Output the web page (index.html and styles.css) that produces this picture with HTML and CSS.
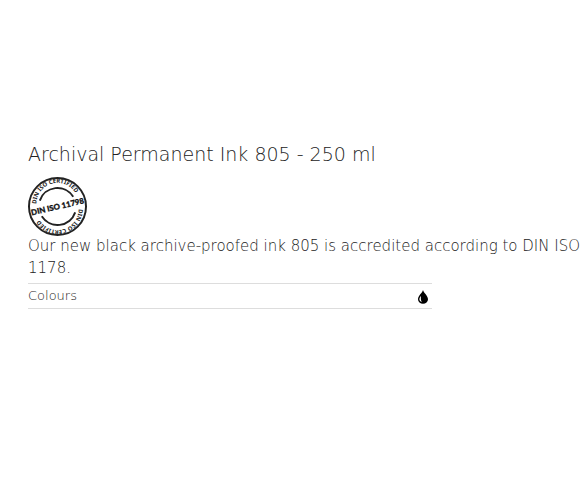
FILE: index.html
```html
<!DOCTYPE html>
<html lang="en">

<head>
    <meta charset="UTF-8">
    <meta name="viewport" content="width=device-width, initial-scale=1.0">
    <title>Archival Permanent Ink 805 - 250 ml</title>
    <link rel="stylesheet" href="styles.css">
</head>

<body>
    <main class="product">
        <h1 class="product-title">Archival Permanent Ink 805 - 250 ml</h1>
        <svg class="seal" viewBox="0 0 60 60" role="img" aria-label="DIN ISO 11798 certified">
            <defs>
                <path id="arc-top" d="M8.5 27.5A21.5 21.5 0 0 1 51.5 27.5" />
                <path id="arc-bottom" d="M51.5 32.5A21.5 21.5 0 0 1 8.5 32.5" />
            </defs>
            <circle class="ring" cx="30" cy="30" r="29" />
            <path class="ring" d="M12 24A19 19 0 0 1 46 20" />
            <path class="ring" d="M48 36A19 19 0 0 1 14 40" />
            <text class="seal-small"><textPath href="#arc-top">DIN ISO CERTIFIED</textPath></text>
            <text class="seal-small"><textPath href="#arc-bottom">DIN ISO CERTIFIED</textPath></text>
            <text class="seal-name" x="30" y="33" transform="rotate(-13 30 30)">DIN ISO 11798</text>
        </svg>
        <p class="product-text">Our new black archive-proofed ink 805 is accredited according to DIN ISO 1178.</p>
        <table class="details">
            <tr>
                <th scope="row">Colours</th>
                <td>
                    <svg class="drop" viewBox="0 0 10 14" role="img" aria-label="Black">
                        <path d="M5 0C5.6 3 10 5.6 10 9.2A5 4.5 0 0 1 0 9.2C0 5.6 4.4 3 5 0Z" />
                        <path class="drop-shine" d="M3 6C.8 8.3 .8 10.8 3.8 12.2C2.9 10.4 2.6 8.6 3 6Z" />
                    </svg>
                </td>
            </tr>
        </table>
    </main>
</body>

</html>
```

FILE: styles.css
```css
body {
    margin: 0;
    background: #fff;
    color: #222;
    font-family: "DejaVu Sans", sans-serif;
    font-size: 15px;
    font-weight: 200;
    line-height: 22px;
}

.product {
    padding: 142px 0 0 28px;
}

.product-title {
    margin: 0 0 11px;
    font-size: 19px;
    font-weight: 200;
    line-height: 24px;
}

.seal {
    display: block;
    width: 59px;
    height: 59px;
}

.ring {
    fill: none;
    stroke: #222;
    stroke-width: 2;
}

.seal-small {
    fill: #222;
    font-family: "Noto Sans", sans-serif;
    font-size: 6px;
    font-weight: 700;
}

.seal-name {
    fill: #111;
    stroke: #111;
    stroke-width: 0.3;
    font-family: Lato, sans-serif;
    font-size: 8px;
    font-weight: 900;
    text-anchor: middle;
}

.product-text {
    margin: -1px 0 4px;
}

.details {
    width: 73%;
    border-collapse: collapse;
    border-top: 1px solid #ddd;
    border-bottom: 1px solid #ddd;
    font-size: 13px;
    line-height: 24px;
}

.details th {
    padding: 0;
    font-weight: 200;
    text-align: left;
}

.details td {
    padding: 0 4px 0 0;
    text-align: right;
}

.drop {
    width: 10px;
    height: 14px;
    vertical-align: middle;
}

.drop-shine {
    fill: #fff;
}
```
